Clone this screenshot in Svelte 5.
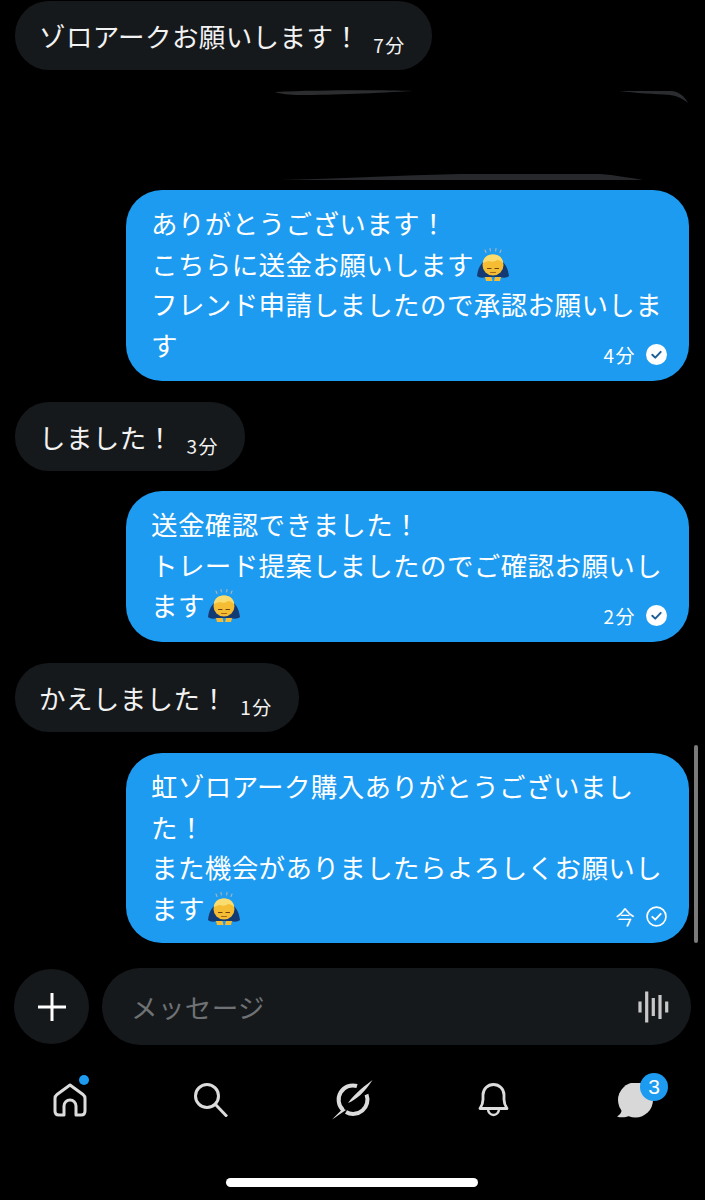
<script>
	const messages = [
		{ mine: false, text: 'ゾロアークお願いします！', time: '7分' },
		{ spacer: true },
		{
			mine: true,
			lines: ['ありがとうございます！', 'こちらに送金お願いします#', 'フレンド申請しましたので承認お願いしま', 'す'],
			time: '4分',
			read: true
		},
		{ mine: false, text: 'しました！', time: '3分' },
		{
			mine: true,
			lines: ['送金確認できました！', 'トレード提案しましたのでご確認お願いし', 'ます#'],
			time: '2分',
			read: true
		},
		{ mine: false, text: 'かえしました！', time: '1分' },
		{
			mine: true,
			lines: ['虹ゾロアーク購入ありがとうございまし', 'た！', 'また機会がありましたらよろしくお願いし', 'ます#'],
			time: '今',
			read: false
		}
	];
</script>

{#snippet bow()}
	<svg class="bow" viewBox="0 0 32 34" aria-hidden="true">
		<path d="M8 2l1 2.500M13 .5l.4 2.500M19 .5l-.4 2.500M24 2l-1 2.500" stroke="#9fb4bd" stroke-width="1.200" stroke-linecap="round" />
		<path d="M0 28C1 20 4 15 8 13h16c4 2 7 7 8 15-2 2-6 2-9 1H9c-3 1-7 1-9-1z" fill="#143a73" />
		<circle cx="16" cy="17" r="10.500" fill="#f5bd33" />
		<path d="M6 15C6 9 11 6.500 16 6.500S26 9 26 15c-2-2-4-3-6-3-2 2-5 2-8 1-2 0-4 1-6 2z" fill="#fbdc6e" />
		<path d="M10.500 20.500h3.500M18 20.500h3.500" stroke="#6b4210" stroke-width="1.200" stroke-linecap="round" />
		<path d="M13.500 24.500h5" stroke="#a8651a" stroke-width="1.200" stroke-linecap="round" />
		<path d="M8 29h6.500l1 4H9zM17 33l1-4h6l-1 4z" fill="#f5bd33" />
	</svg>
{/snippet}

<div class="screen">
	<div class="thread">
		{#each messages as m}
			{#if m.spacer}
				<div class="redacted">
					<svg viewBox="0 80 705 120" aria-hidden="true">
						<path d="M275 92C320 90 380 90 413 91 380 93 330 95 300 95 290 95 280 94 275 92z" fill="#2b2d2f" />
						<path d="M620 91H672C680 92 685 97 688 103 683 99 678 96 670 95 655 94 635 93 620 91z" fill="#2a2c30" />
						<path d="M280 180C340 179 400 175 460 174H600C615 175 630 178 643 180z" fill="#26282c" />
					</svg>
				</div>
			{:else if m.mine}
				<div class="bubble mine">
					{#each m.lines as line}
						<div class="line">
							<span>{line.replace('#', '')}</span>{#if line.endsWith('#')}{@render bow()}{/if}
						</div>
					{/each}
					<div class="meta">
						<span>{m.time}</span>
						{#if m.read}
							<svg viewBox="0 0 20 20" aria-hidden="true">
								<circle cx="10" cy="10" r="10" fill="#fff" />
								<path d="M6 10.300l2.800 2.700L14 7.500" fill="none" stroke="#1d5f96" stroke-width="1.900" stroke-linecap="round" stroke-linejoin="round" />
							</svg>
						{:else}
							<svg viewBox="0 0 20 20" aria-hidden="true">
								<circle cx="10" cy="10" r="9" fill="none" stroke="#fff" stroke-width="1.600" />
								<path d="M6 10.300l2.800 2.700L14 7.500" fill="none" stroke="#fff" stroke-width="1.800" stroke-linecap="round" stroke-linejoin="round" />
							</svg>
						{/if}
					</div>
				</div>
			{:else}
				<div class="bubble theirs">
					<span>{m.text}</span><small>{m.time}</small>
				</div>
			{/if}
		{/each}
	</div>

	<div class="composer">
		<button class="plus" aria-label="追加">
			<svg viewBox="0 0 28 28"><path d="M14 0v28M0 14h28" stroke="#fff" stroke-width="3" /></svg>
		</button>
		<div class="field">
			<span>メッセージ</span>
			<svg viewBox="0 0 32 32" aria-hidden="true">
				<path d="M2 10.500v11M8.700 .5v31M15.300 7v18M22 4v24M28.700 10.500v11" stroke="#c8c8c8" stroke-width="3.200" />
			</svg>
		</div>
	</div>

	<nav>
		<div class="tab">
			<svg viewBox="0 0 34 34" aria-hidden="true">
				<path d="M11 32V23a6 6 0 0 1 12 0v9h5q4 0 4-4V15.500q0-2.500-2-4L17 2 4 11.500q-2 1.500-2 4V28q0 4 4 4z" fill="none" stroke="#dcdcdc" stroke-width="3" stroke-linejoin="round" />
			</svg>
			<i class="dot"></i>
		</div>
		<div class="tab">
			<svg viewBox="0 0 34 34" aria-hidden="true">
				<circle cx="13" cy="13" r="11.500" fill="none" stroke="#dcdcdc" stroke-width="3" />
				<path d="M21.500 21.500 33 33.500" stroke="#dcdcdc" stroke-width="3" />
			</svg>
		</div>
		<div class="tab">
			<svg class="orbit" viewBox="0 0 41 40" aria-hidden="true">
				<path d="M25 6A14.300 14.300 0 0 0 11 30M34.500 14.500A14.300 14.300 0 0 1 14 32" fill="none" stroke="#dcdcdc" stroke-width="4" />
				<path d="M40.500 0C34 5 24 12 16 23 24 20 33 12 40.500 0zM11 28.500 0 39.500C4 37 9 33 14 30z" fill="#dcdcdc" />
			</svg>
		</div>
		<div class="tab">
			<svg viewBox="0 0 31 34" aria-hidden="true">
				<path d="M2 25.500c2-3 3-5 3-9V12a10.500 10.500 0 0 1 21 0v4.500c0 4 1 6 3 9z" fill="none" stroke="#dcdcdc" stroke-width="2.800" stroke-linejoin="round" />
				<path d="M10 26a5.500 6 0 0 0 11 0" fill="none" stroke="#dcdcdc" stroke-width="2.400" />
			</svg>
		</div>
		<div class="tab">
			<svg viewBox="0 0 37 35" aria-hidden="true">
				<circle cx="19.500" cy="17" r="17.500" fill="#d8d8d8" />
				<path d="M6 25c0 4-2 7-5 8.500 4 1.500 10 1 14-1.500z" fill="#d8d8d8" />
			</svg>
			<b class="badge">3</b>
		</div>
	</nav>

	<div class="home-bar"></div>
	<div class="scrollbar"></div>
</div>

<style>
	:global(body) {
		margin: 0;
		background: #000;
	}

	.screen {
		position: relative;
		height: 1200px;
		background: #000;
		color: #fff;
		font-family: 'Noto Sans CJK JP', 'Noto Sans', sans-serif;
		overflow: hidden;
	}

	.thread {
		display: flex;
		flex-direction: column;
		align-items: flex-start;
		gap: 21px;
		padding: 1px 16px 0 15px;
		height: 943px;
		box-sizing: border-box;
	}

	.bubble {
		box-sizing: border-box;
		flex: none;
		font-size: 26.500px;
		letter-spacing: 0.4px;
	}

	.theirs {
		display: flex;
		align-items: center;
		height: 69px;
		padding: 0 26px 0 24px;
		border-radius: 34px;
		background: #16191b;
		color: #f2f2f2;
	}

	.theirs small {
		margin: 18px 0 0 13px;
		font-size: 19px;
		letter-spacing: 1.500px;
	}

	.mine {
		position: relative;
		align-self: flex-end;
		width: 563px;
		padding: 13px 25px 0;
		border-radius: 36px;
		background: #1d9bf0;
		line-height: 40.500px;
	}

	.mine:nth-child(3) {
		height: 191px;
	}

	.mine:nth-child(5) {
		height: 151px;
		margin-top: -1px;
	}

	.mine:nth-child(7) {
		height: 190px;
	}

	.line {
		display: flex;
		align-items: center;
		height: 40.500px;
		white-space: nowrap;
	}

	.bow {
		flex: none;
		width: 32px;
		height: 34px;
		margin: 2px 0 0 3px;
	}

	.meta {
		position: absolute;
		right: 22px;
		bottom: 16px;
		display: flex;
		align-items: center;
		gap: 10px;
		font-size: 19px;
		line-height: 21px;
		letter-spacing: 1.500px;
	}

	.meta svg {
		width: 21px;
		height: 21px;
	}

	.redacted {
		position: relative;
		flex: none;
		height: 78px;
		align-self: stretch;
	}

	.redacted svg {
		position: absolute;
		left: -15px;
		top: -11px;
		width: 705px;
		height: 120px;
	}

	.composer {
		display: flex;
		align-items: center;
		gap: 13px;
		margin-top: 25px;
		padding: 0 14px;
	}

	.plus {
		display: flex;
		align-items: center;
		justify-content: center;
		flex: none;
		width: 75px;
		height: 75px;
		padding: 0;
		border: 0;
		border-radius: 50%;
		background: #16191b;
	}

	.plus svg {
		width: 28px;
		height: 28px;
	}

	.field {
		display: flex;
		align-items: center;
		justify-content: space-between;
		flex: 1;
		height: 77px;
		padding: 0 21px 0 29px;
		border-radius: 39px;
		background: #16191b;
		color: #6f7274;
		font-size: 26.500px;
		letter-spacing: 0.4px;
	}

	.field svg {
		width: 32px;
		height: 32px;
	}

	nav {
		display: flex;
		gap: 107px;
		margin-top: 38px;
		padding-left: 53px;
	}

	.tab {
		position: relative;
		display: flex;
		align-items: center;
		justify-content: center;
		width: 34px;
		height: 34px;
	}

	.tab svg {
		flex: none;
		width: 34px;
		height: 34px;
	}

	.tab svg.orbit {
		width: 41px;
		height: 40px;
	}

	.tab:nth-child(4) svg {
		width: 31px;
	}

	.tab:nth-child(5) svg {
		width: 37px;
		height: 35px;
	}

	.dot {
		position: absolute;
		top: -8px;
		right: -2px;
		width: 10px;
		height: 10px;
		border-radius: 50%;
		background: #1d9bf0;
	}

	.badge {
		position: absolute;
		top: -10px;
		right: -17px;
		width: 28px;
		height: 28px;
		border-radius: 50%;
		background: #1d9bf0;
		font: 400 21px/28px 'Liberation Sans', sans-serif;
		text-align: center;
	}

	.home-bar {
		position: absolute;
		left: 226px;
		bottom: 13px;
		width: 252px;
		height: 9px;
		border-radius: 5px;
		background: #fff;
	}

	.scrollbar {
		position: absolute;
		left: 694px;
		top: 745px;
		width: 4px;
		height: 198px;
		border-radius: 2px;
		background: #7a7a7a;
	}
</style>
